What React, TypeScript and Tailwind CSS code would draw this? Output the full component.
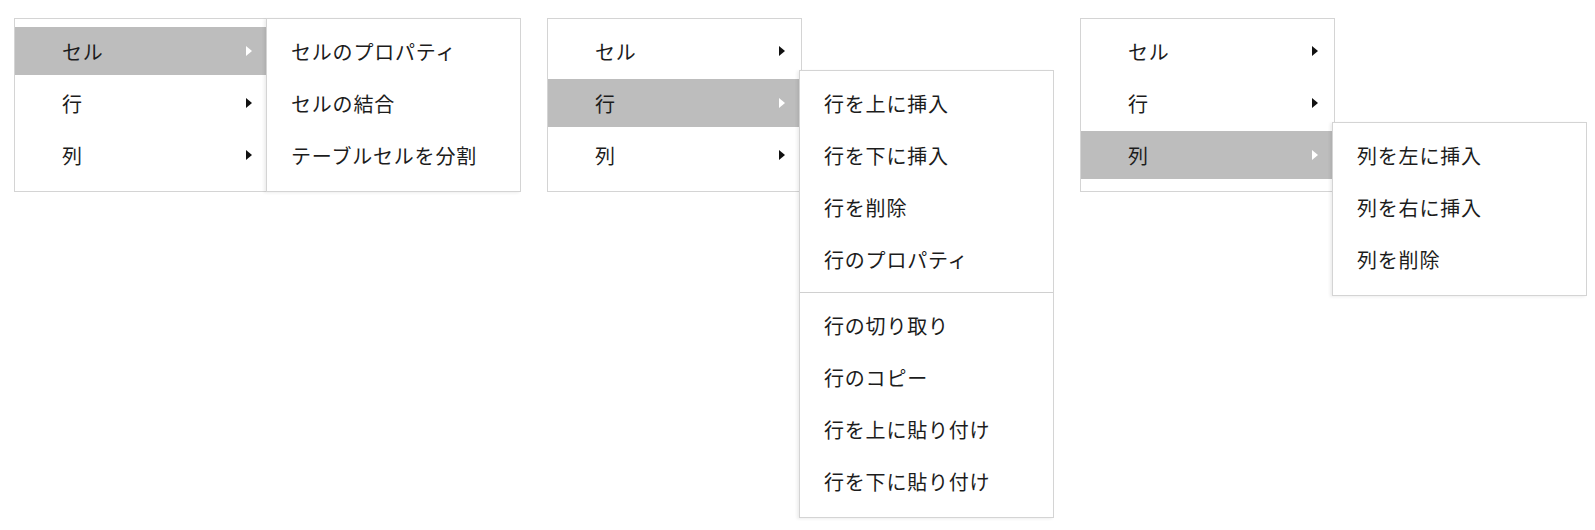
const font = {
  fontFamily: '"Noto Sans CJK JP", "Noto Sans", sans-serif',
};

type Group = {
  main: string[];
  active: number;
  offset: string;
  sections: string[][];
};

const groups: Group[] = [
  {
    main: ["セル", "行", "列"],
    active: 0,
    offset: "mt-0",
    sections: [["セルのプロパティ", "セルの結合", "テーブルセルを分割"]],
  },
  {
    main: ["セル", "行", "列"],
    active: 1,
    offset: "mt-[52px]",
    sections: [
      ["行を上に挿入", "行を下に挿入", "行を削除", "行のプロパティ"],
      ["行の切り取り", "行のコピー", "行を上に貼り付け", "行を下に貼り付け"],
    ],
  },
  {
    main: ["セル", "行", "列"],
    active: 2,
    offset: "mt-[104px]",
    sections: [["列を左に挿入", "列を右に挿入", "列を削除"]],
  },
];

function Arrow({ light }: { light: boolean }) {
  return (
    <span
      className={
        "h-0 w-0 border-y-[5px] border-l-[6px] border-y-transparent " +
        (light ? "border-l-white" : "border-l-[#111]")
      }
    />
  );
}

function MainMenu({ items, active }: { items: string[]; active: number }) {
  return (
    <div className="flex w-[255px] flex-col gap-1 border border-[#d4d4d4] bg-white pt-2 pb-3">
      {items.map((label, i) => (
        <div
          key={label}
          className={
            "flex h-12 items-center justify-between pl-[47px] pr-4 text-[20px] leading-none tracking-[0.8px] text-[#1c1c1c] " +
            (i === active ? "bg-[#bdbdbd]" : "")
          }
        >
          <span className="pt-[2px]">{label}</span>
          <Arrow light={i === active} />
        </div>
      ))}
    </div>
  );
}

function SubMenu({ sections, offset }: { sections: string[][]; offset: string }) {
  return (
    <div
      className={
        "relative z-10 -ml-[3px] w-[255px] border border-[#d4d4d4] bg-white shadow-[-2px_1px_3px_rgba(0,0,0,0.07)] " +
        offset
      }
    >
      {sections.map((items, s) => (
        <div
          key={s}
          className={
            "flex flex-col gap-1 pt-2 " +
            (s < sections.length - 1 ? "border-b border-[#d0d0d0] pb-[9px]" : "pb-3")
          }
        >
          {items.map((label) => (
            <div
              key={label}
              className="flex h-12 items-center pl-6 pt-[2px] text-[20px] leading-none tracking-[0.8px] text-[#1c1c1c]"
            >
              {label}
            </div>
          ))}
        </div>
      ))}
    </div>
  );
}

export default function App() {
  return (
    <div className="min-h-screen bg-white" style={font}>
      <div className="flex items-start gap-[26px] pt-[18px] pl-[14px]">
        {groups.map((g, i) => (
          <div key={i} className="flex items-start">
            <MainMenu items={g.main} active={g.active} />
            <SubMenu sections={g.sections} offset={g.offset} />
          </div>
        ))}
      </div>
    </div>
  );
}
